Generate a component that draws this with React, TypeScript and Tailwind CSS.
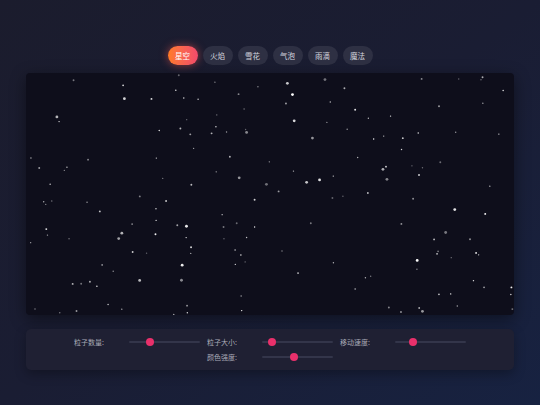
import React from 'react';

const effects = ['星空', '火焰', '雪花', '气泡', '雨滴', '魔法'];

const controls = [
    { label: '粒子数量:', value: 30 },
    { label: '粒子大小:', value: 14 },
    { label: '移动速度:', value: 25 },
    { label: '颜色强度:', value: 45 },
];

// simple seeded random so the starfield stays the same every render
const makeStars = (count: number) => {
    let seed = 42;
    const rand = () => {
        seed = (seed * 16807) % 2147483647;
        return seed / 2147483647;
    };
    return Array.from({ length: count }, () => {
        const big = rand();
        return {
            x: rand() * 488,
            y: rand() * 242,
            r: big > 0.85 ? 1.4 : big > 0.5 ? 0.95 : 0.7,
            o: 0.35 + rand() * 0.65,
        };
    });
};

const stars = makeStars(170);

export default function App() {
    return (
        <div
            className="w-full min-h-[405px] bg-gradient-to-br from-[#1b1c2d] via-[#1a1d33] to-[#172241] flex flex-col items-center pt-[46px]"
            style={{ fontFamily: '"Noto Sans CJK SC", "Noto Sans", sans-serif' }}
        >
            {/* Effect tabs */}
            <div className="flex gap-[5px]">
                {effects.map((name, i) => (
                    <button
                        key={name}
                        className={
                            i === 0
                                ? 'w-[30px] h-[19px] rounded-full bg-gradient-to-r from-[#ff7a24] to-[#f24a6b] text-white text-[7.5px] leading-none shadow-[0_0_8px_rgba(255,90,80,0.55)]'
                                : 'w-[30px] h-[19px] rounded-full bg-[#2e3043] text-[#d4d5de] text-[7.5px] leading-none'
                        }
                    >
                        {name}
                    </button>
                ))}
            </div>

            {/* Canvas */}
            <div className="mt-[8px] w-[488px] h-[242px] rounded-[4px] bg-[#0e0e1b] shadow-[0_4px_16px_rgba(0,0,0,0.45)] overflow-hidden">
                <svg width="488" height="242" viewBox="0 0 488 242">
                    {stars.map((s, i) => (
                        <circle key={i} cx={s.x} cy={s.y} r={s.r} fill="#ffffff" opacity={s.o} />
                    ))}
                </svg>
            </div>

            {/* Controls */}
            <div className="mt-[14px] w-[488px] h-[41px] rounded-[5px] bg-[#1f2033] shadow-[0_4px_12px_rgba(0,0,0,0.3)] flex flex-wrap justify-center content-center gap-x-[7px] gap-y-[6px] px-[40px]">
                {controls.map((c) => (
                    <div key={c.label} className="w-[126px] flex items-center">
                        <span className="w-[55px] text-[7px] leading-[9px] text-[#a9aab6]">{c.label}</span>
                        <div className="relative w-[71px] h-[2px] rounded-full bg-[#33354a]">
                            <div
                                className="absolute top-1/2 w-[8px] h-[8px] -mt-[4px] -ml-[4px] rounded-full bg-[#e8306b]"
                                style={{ left: `${c.value}%` }}
                            />
                        </div>
                    </div>
                ))}
            </div>
        </div>
    );
}
